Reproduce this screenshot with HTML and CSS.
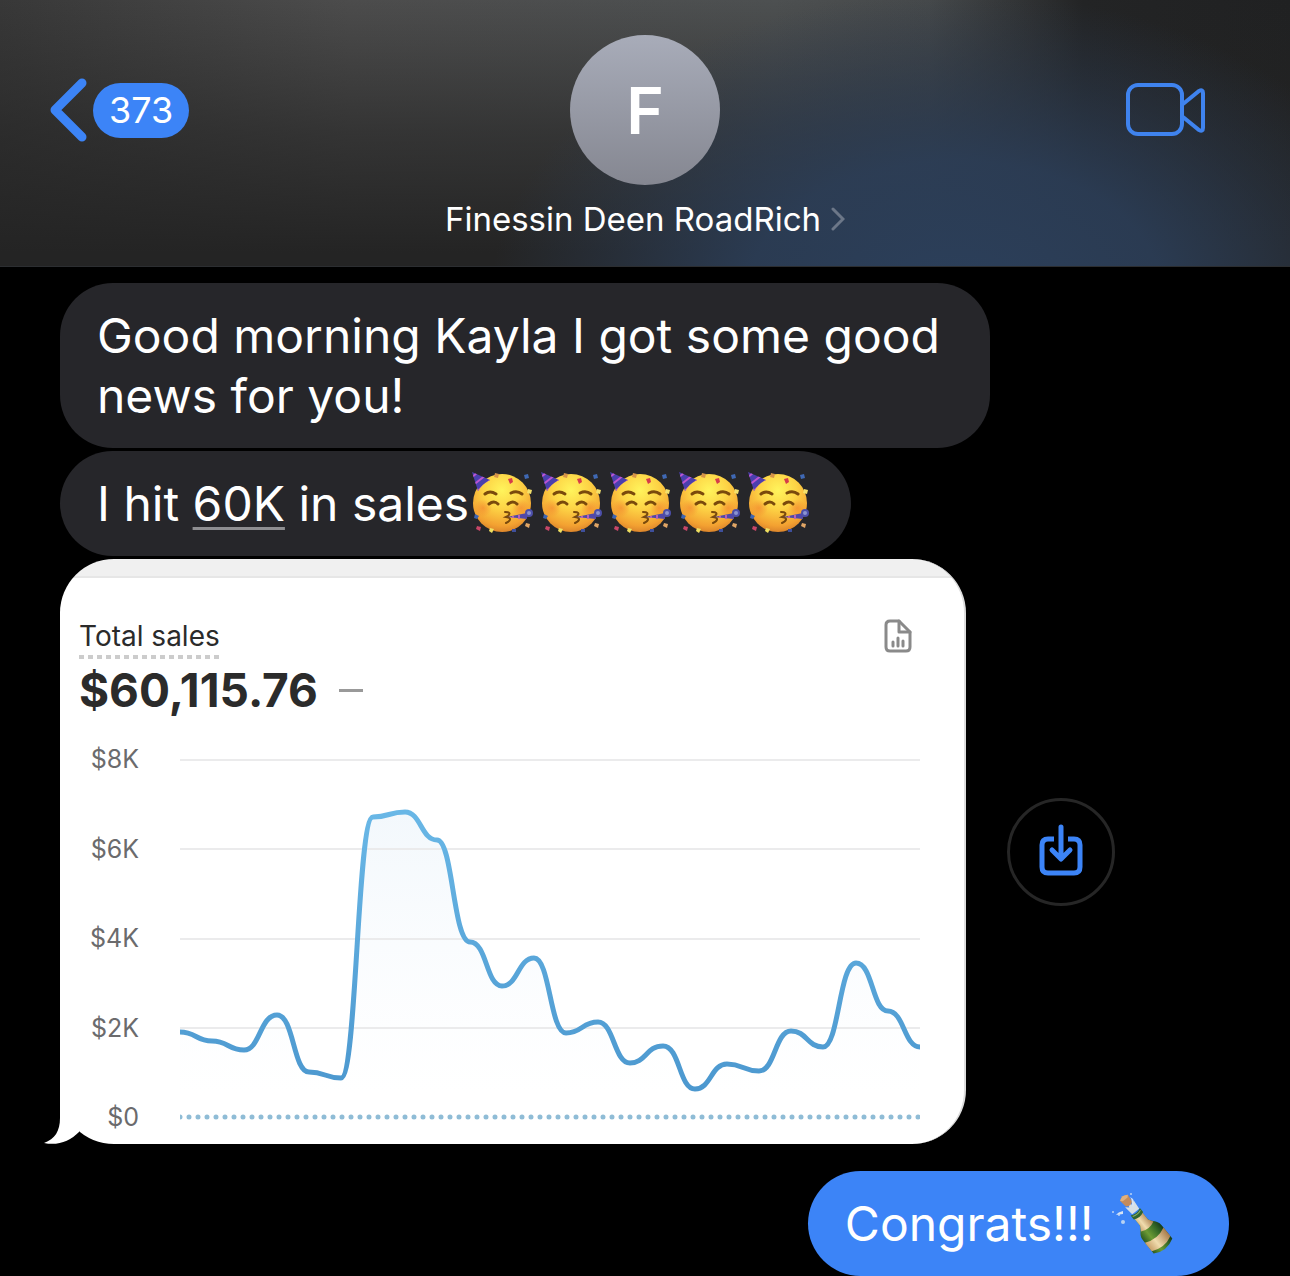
FILE: index.html
```html
<!DOCTYPE html>
<html lang="en">
<head>
<meta charset="utf-8">
<meta name="viewport" content="width=device-width, initial-scale=1">
<title>Finessin Deen RoadRich</title>
<link rel="stylesheet" href="styles.css">
</head>
<body>
<svg class="sprites" aria-hidden="true">
  <defs>
    <radialGradient id="face" cx="50%" cy="28%" r="72%">
      <stop offset="0" stop-color="#fff45c"/>
      <stop offset=".45" stop-color="#fdd345"/>
      <stop offset=".85" stop-color="#f3a131"/>
      <stop offset="1" stop-color="#dc852b"/>
    </radialGradient>
    <radialGradient id="blush">
      <stop offset="0" stop-color="#f3822e" stop-opacity=".6"/>
      <stop offset="1" stop-color="#f3822e" stop-opacity="0"/>
    </radialGradient>
    <clipPath id="hat"><path d="M3 5 21 13Q13 17 9 24Z"/></clipPath>
    <symbol id="party" viewBox="0 0 69 69">
      <circle cx="33" cy="36" r="29" fill="url(#face)"/>
      <circle cx="14" cy="41" r="9" fill="url(#blush)"/>
      <circle cx="52" cy="41" r="9" fill="url(#blush)"/>
      <g clip-path="url(#hat)">
        <path d="M0 0H24V26H0Z" fill="#4a3fae"/>
        <path d="M1 12 9 5M3 19 17 8M6 26 24 11" stroke="#bd55cf" stroke-width="2"/>
      </g>
      <g fill="none" stroke="#7a4a0c" stroke-width="2" stroke-linecap="round">
        <path d="M16 27q5-4 11 0M42 26q6-3 11 1" stroke-width="3"/>
        <path d="M20 37q5-4 9 0M39 37q5-4 9 0" stroke-width="3"/>
        <path d="M36 45q7 0 3 4l-2 1q7 1 2 5l-2 1"/>
      </g>
      <path d="M38 50 58 46V52Z" fill="#5148a9"/>
      <path d="M44 49v2M50 48v4" stroke="#bb62b4" stroke-width="2"/>
      <circle cx="60" cy="46" r="3" fill="#8b93cf" stroke="#4d4faa" stroke-width="2"/>
      <path d="m26 6 4 1-1 4-4-1z" fill="#d69448"/>
      <path d="m55 8 4-1 1 4-4 1z" fill="#3f68b4"/>
      <path d="m39 12 4-1 1 4-3 2z" fill="#d53c4b"/>
      <path d="m59 22 4 1-1 4-4-1z" fill="#f3e06a"/>
      <path d="m6 47 4 2-2 3-3-1z" fill="#3e64b1"/>
      <path d="m8 59 4 1-1 4-4-2z" fill="#c84668"/>
      <path d="m21 61 4 1-2 4-3-2z" fill="#efe060"/>
      <path d="m43 62h4v3h-4z" fill="#3e4f9b"/>
      <path d="m57 56 4 1-1 4-4-2z" fill="#e0a565"/>
    </symbol>
    <linearGradient id="glass" x1="0" y1="0" x2="1" y2="0">
      <stop offset="0" stop-color="#2b591f"/>
      <stop offset=".35" stop-color="#6c9b35"/>
      <stop offset=".7" stop-color="#386e28"/>
      <stop offset="1" stop-color="#163b1b"/>
    </linearGradient>
    <linearGradient id="label" x1="0" y1="0" x2="1" y2="0">
      <stop offset="0" stop-color="#c9a16b"/>
      <stop offset=".4" stop-color="#f0dcae"/>
      <stop offset="1" stop-color="#a87c4b"/>
    </linearGradient>
    <symbol id="bottle" viewBox="-5 -2 69 69">
      <g transform="rotate(-39 34 36)">
        <path d="M29 21h10v10c0 6 7 7 7 15v17q-12 7-24 0V46c0-8 7-9 7-15z" fill="url(#glass)"/>
        <path d="M29 22h10v11l3 5q-8 4-16 0l3-5z" fill="url(#label)"/>
        <path d="M22 49q12 6 24 0v11q-12 6-24 0z" fill="url(#label)"/>
        <path d="M28 19q6 3 12 0v5q-6 3-12 0z" fill="#2f6530"/>
        <path d="M29 21q5 2 10 0" stroke="#89ad6a" stroke-width="1" fill="none"/>
        <path d="M30 19 29 9l3 3 2-6 2 6 4-3-1 10z" fill="#d7dfe5"/>
        <path d="M29 1q5-4 10 0l-1 8q-4 3-8 0z" fill="#c48b5b"/>
        <path d="M29 1q5-4 10 0l-2 2h-6z" fill="#e1b07c"/>
      </g>
      <g fill="#b8d2f3">
        <circle cx="1" cy="23" r="1"/><circle cx="11" cy="33" r="2"/><circle cx="19" cy="5" r="1"/>
        <circle cx="7" cy="26" r="1"/>
      </g>
      <path d="M20 16q0-6-2-8l3 2q2 5 0 8zM11 22q-5 1-7 4l7-1z" fill="#d7e4f4"/>
    </symbol>
  </defs>
</svg>

<header class="bar">
  <a class="back" href="#" aria-label="Back, 373 unread">
    <svg class="back-arrow" viewBox="0 0 38 64" aria-hidden="true"><path d="M32 5 5 32 32 59"/></svg>
    <span class="count">373</span>
  </a>
  <a class="contact" href="#">
    <span class="avatar">F</span>
    <span class="name">Finessin Deen RoadRich
      <svg class="name-arrow" viewBox="0 0 14 24" aria-hidden="true"><path d="M2 2 12 12 2 22"/></svg>
    </span>
  </a>
  <button class="video" type="button" aria-label="Video call">
    <svg viewBox="0 0 80 54" aria-hidden="true">
      <rect x="2" y="2" width="54" height="49" rx="10"/>
      <path d="M57 21 73 8q4-2 4 2v35q0 4-4 2L57 34"/>
    </svg>
  </button>
</header>

<main class="thread">
  <p class="bubble">Good morning Kayla I got some good news for you!</p>
  <p class="bubble">I hit <a class="detected" href="#">60K</a> in sales<span class="emojis" role="img" aria-label="Five partying faces"><svg><use href="#party"/></svg><svg><use href="#party"/></svg><svg><use href="#party"/></svg><svg><use href="#party"/></svg><svg><use href="#party"/></svg></span></p>

  <div class="attachment">
    <div class="photo">
      <svg class="tail" viewBox="0 0 36 56" aria-hidden="true"><path d="M16 0V30C16 43 11 51 0 55 14 58 26 53 35 44V0Z"/></svg>
      <section class="report">
        <div class="summary">
          <div>
            <h2 class="metric">Total sales</h2>
            <p class="amount">$60,115.76 <span class="change"></span></p>
          </div>
          <svg class="file-icon" viewBox="0 0 28 34" aria-hidden="true">
            <path d="M6 2H15L26 13V28Q26 32 22 32H6Q2 32 2 28V6Q2 2 6 2"/>
            <path d="M15 2V13H26"/>
            <path d="M9 23V27M14 19V27M19 22V27"/>
          </svg>
        </div>
        <div class="chart">
          <div class="axis"><span>$8K</span><span>$6K</span><span>$4K</span><span>$2K</span><span>$0</span></div>
          <svg class="plot" viewBox="0 0 740 388" role="img" aria-label="Total sales over time">
            <defs>
              <linearGradient id="line" gradientUnits="userSpaceOnUse" x1="0" y1="68" x2="0" y2="345">
                <stop offset="0" stop-color="#69b7e6"/>
                <stop offset="1" stop-color="#4c98cf"/>
              </linearGradient>
              <linearGradient id="area" gradientUnits="userSpaceOnUse" x1="0" y1="68" x2="0" y2="350">
                <stop offset="0" stop-color="#f3f8fc"/>
                <stop offset="1" stop-color="#f8fbfe" stop-opacity="0"/>
              </linearGradient>
              <path id="series" d="M0 288C16 288 16 297 32 297S48 306 64 306 80 271 97 271 113 328 129 328 145 334 161 334 177 73 193 73 209 68 225 68 241 96 257 96 273 198 290 198 306 242 322 242 338 214 354 214 370 289 386 289 402 278 418 278 434 319 450 319 466 302 483 302 499 345 515 345 531 320 547 320 563 327 579 327 595 287 611 287 627 303 643 303 659 219 676 219 692 267 708 267 724 303 740 303"/>
            </defs>
            <path fill="url(#area)" d="M0 373V288C16 288 16 297 32 297S48 306 64 306 80 271 97 271 113 328 129 328 145 334 161 334 177 73 193 73 209 68 225 68 241 96 257 96 273 198 290 198 306 242 322 242 338 214 354 214 370 289 386 289 402 278 418 278 434 319 450 319 466 302 483 302 499 345 515 345 531 320 547 320 563 327 579 327 595 287 611 287 627 303 643 303 659 219 676 219 692 267 708 267 724 303 740 303V373Z"/>
            <path class="grid" d="M0 16H740M0 105H740M0 195H740M0 284H740"/>
            <path class="baseline" d="M0 373H740"/>
            <use class="series" href="#series"/>
          </svg>
        </div>
      </section>
    </div>
    <button class="save" type="button" aria-label="Save photo">
      <svg viewBox="0 0 44 52" aria-hidden="true">
        <path class="tray" d="M15 15H9Q3 15 3 21V43Q3 49 9 49H35Q41 49 41 43V21Q41 15 35 15H29"/>
        <path class="arrow" d="M22 3V34M13 26 22 35 31 26"/>
      </svg>
    </button>
  </div>

  <p class="bubble sent">Congrats!!! <span class="emojis" role="img" aria-label="Bottle with popping cork"><svg><use href="#bottle"/></svg></span></p>
</main>
</body>
</html>
```
FILE: styles.css
```css
* {
  box-sizing: border-box;
}

body {
  margin: 0;
  background: #000;
  color: #fff;
  font-family: Inter, "Liberation Sans", sans-serif;
}

h2,
p {
  margin: 0;
}

a {
  color: inherit;
  text-decoration: none;
}

button {
  padding: 0;
  border: 0;
  background: none;
}

svg {
  display: block;
  fill: none;
}

.sprites {
  position: absolute;
  width: 0;
  height: 0;
}

/* Header */

.bar {
  display: grid;
  grid-template-columns: 1fr auto 1fr;
  padding: 35px 84px 27px 50px;
  border-bottom: 1px solid #2c2e31;
  background:
    radial-gradient(ellipse 36% 115% at 74% 112%, rgb(44 65 94 / 95%), rgb(44 64 92 / 82%) 45%, rgb(44 64 92 / 35%) 75%, transparent),
    linear-gradient(to bottom, transparent, rgb(36 36 36 / 60%) 50%, #242424 95%),
    linear-gradient(to right, #383838, #4c4c4c 27%, #4d5051 60%, #46494a 72%, #232425 84%, #202122);
}

.back {
  display: flex;
  align-items: center;
  justify-self: start;
  gap: 5px;
  height: 150px;
}

.back-arrow {
  width: 38px;
  height: 64px;
  stroke: #3c84f7;
  stroke-width: 9;
  stroke-linecap: round;
  stroke-linejoin: round;
}

.count {
  padding: 0 16px;
  border-radius: 28px;
  background: #3c84f7;
  font-size: 36px;
  line-height: 55px;
}

.contact {
  display: flex;
  flex-direction: column;
  align-items: center;
  gap: 14px;
  margin-left: 34px;
}

.avatar {
  width: 150px;
  height: 150px;
  border-radius: 50%;
  background: linear-gradient(#a8acb9, #858791);
  font-size: 64px;
  font-weight: 600;
  line-height: 152px;
  text-align: center;
}

.name {
  display: flex;
  align-items: center;
  gap: 10px;
  font-size: 33px;
  line-height: 40px;
}

.name-arrow {
  width: 14px;
  height: 24px;
  stroke: #6c7788;
  stroke-width: 3;
  stroke-linecap: round;
}

.video {
  display: flex;
  align-items: center;
  justify-self: end;
  height: 150px;
}

.video svg {
  width: 80px;
  height: 54px;
  stroke: #3f83ee;
  stroke-width: 4;
}

/* Messages */

.thread {
  display: flex;
  flex-direction: column;
  align-items: flex-start;
  gap: 3px;
  padding: 16px 61px 0 60px;
}

.bubble {
  max-width: calc(100% - 239px);
  padding: 23px 37px 22px;
  border-radius: 53px;
  background: #26262a;
  font-size: 48px;
  line-height: 60px;
}

.detected {
  text-decoration: underline 3px #8e8e91;
  text-underline-offset: 6px;
}

.emojis {
  display: inline-flex;
  height: 60px;
  vertical-align: top;
}

.emojis svg {
  width: 69px;
  height: 69px;
  margin-top: -7px;
}

.sent {
  align-self: flex-end;
  margin-top: 24px;
  padding-right: 53px;
  background: #3c84f7;
}

/* Photo attachment */

.attachment {
  display: flex;
  align-items: center;
  gap: 41px;
  width: 100%;
}

.photo {
  position: relative;
  width: calc(100% - 263px);
}

.tail {
  position: absolute;
  bottom: 0;
  left: -16px;
  width: 36px;
  height: 56px;
  fill: #fff;
}

.report {
  padding: 40px 44px 12px 19px;
  border-right: 2px solid #ddd;
  border-radius: 54px;
  background: linear-gradient(#f0f0f0 17px, #e6e6e6 17px, #e6e6e6 19px, #fff 19px);
  color: #2b2b2b;
}

.summary {
  display: flex;
  justify-content: space-between;
  padding: 20px 8px 26px 0;
}

.metric {
  width: fit-content;
  padding-bottom: 5px;
  background: repeating-linear-gradient(to right, #ccc 0 5px, transparent 5px 9px) bottom / 100% 4px no-repeat;
  font-size: 28px;
  font-weight: 400;
  line-height: 35px;
}

.amount {
  display: flex;
  align-items: center;
  gap: 21px;
  padding-top: 4px;
  font-size: 46px;
  font-weight: 700;
  line-height: 55px;
}

.change {
  width: 24px;
  height: 3px;
  background: #999;
}

.file-icon {
  width: 28px;
  height: 34px;
  stroke: #8a8a8a;
  stroke-width: 3;
  stroke-linecap: round;
  stroke-linejoin: round;
}

.chart {
  display: grid;
  grid-template-columns: 60px 1fr;
  gap: 41px;
}

.axis {
  display: flex;
  flex-direction: column;
  justify-content: space-between;
  color: #6b6b6d;
  font-size: 25px;
  line-height: 30px;
  text-align: right;
}

.plot {
  width: 100%;
}

.grid {
  stroke: #ebebec;
  stroke-width: 2;
}

.baseline {
  stroke: #8fbcd6;
  stroke-width: 5;
  stroke-linecap: round;
  stroke-dasharray: 0 9;
}

.series {
  stroke: url(#line);
  stroke-width: 5;
}

.save {
  display: grid;
  place-items: center;
  width: 108px;
  height: 108px;
  padding-bottom: 4px;
  border: 3px solid #262626;
  border-radius: 50%;
}

.save svg {
  width: 44px;
  height: 52px;
  stroke: #3c84f7;
}

.tray {
  stroke-width: 5;
}

.arrow {
  stroke-width: 5;
  stroke-linecap: round;
  stroke-linejoin: round;
}
```
